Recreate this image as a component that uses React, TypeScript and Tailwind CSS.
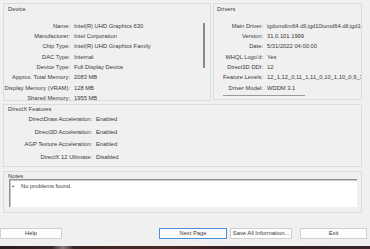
import React from 'react';

const deviceRows: [string, string][] = [
  ['Name:', 'Intel(R) UHD Graphics 630'],
  ['Manufacturer:', 'Intel Corporation'],
  ['Chip Type:', 'Intel(R) UHD Graphics Family'],
  ['DAC Type:', 'Internal'],
  ['Device Type:', 'Full Display Device'],
  ['Approx. Total Memory:', '2083 MB'],
  ['Display Memory (VRAM):', '128 MB'],
  ['Shared Memory:', '1955 MB'],
];

const driverRows: [string, string][] = [
  ['Main Driver:', 'igdumdim64.dll,igd10iumd64.dll,igd10iumd64.dll'],
  ['Version:', '31.0.101.1999'],
  ['Date:', '5/31/2022 04:00:00'],
  ['WHQL Logo\'d:', 'Yes'],
  ['Direct3D DDI:', '12'],
  ['Feature Levels:', '12_1,12_0,11_1,11_0,10_1,10_0,9_3'],
  ['Driver Model:', 'WDDM 3.1'],
];

const featureRows: [string, string][] = [
  ['DirectDraw Acceleration:', 'Enabled'],
  ['Direct3D Acceleration:', 'Enabled'],
  ['AGP Texture Acceleration:', 'Enabled'],
  ['DirectX 12 Ultimate:', 'Disabled'],
];

const Row: React.FC<{ label: string; value: string; labelW: string; h: string }> = ({ label, value, labelW, h }) => (
  <div className={`flex items-center whitespace-nowrap ${h}`}>
    <div className={`flex shrink-0 justify-end ${labelW}`}>
      <span>{label}</span>
    </div>
    <span className="pl-[4px]">{value}</span>
  </div>
);

export default function App() {
  return (
    <div
      className="relative flex h-[249px] w-[370px] flex-col overflow-hidden bg-[#f0f0f0] text-[5.8px] text-[#3a3a3a]"
      style={{ fontFamily: '"Liberation Sans", Arial, sans-serif' }}
    >
      {/* top row */}
      <div className="flex h-[101px] shrink-0 gap-[2px] pl-[3px] pt-[3px]">
        <div className="relative h-[98px] w-[208px] border border-[#dcdcdc]">
          <div className="absolute left-[4px] top-[1px] leading-[8px]">Device</div>
          <div className="mt-[17px] flex flex-col">
            {deviceRows.map(([l, v]) => (
              <Row key={l} label={l} value={v} labelW="w-[66px]" h="h-[10.3px]" />
            ))}
          </div>
          <div className="absolute left-[199px] top-[19px] h-[45px] w-[1.5px] bg-[#8a8a8a]" />
        </div>
        <div className="relative h-[97px] w-[149px] overflow-hidden border border-[#dcdcdc]">
          <div className="absolute left-[3px] top-[1px] leading-[8px]">Drivers</div>
          <div className="mt-[17px] flex flex-col">
            {driverRows.map(([l, v]) => (
              <Row key={l} label={l} value={v} labelW="w-[49px]" h="h-[10.3px]" />
            ))}
          </div>
          <div className="absolute bottom-[3px] left-[9px] h-[1.5px] w-[82px] bg-[#9a9a9a]" />
        </div>
      </div>

      {/* DirectX Features */}
      <div className="relative ml-[3px] mt-[3px] h-[63px] w-[359px] shrink-0 border border-[#dcdcdc]">
        <div className="absolute left-[4px] top-[0px] leading-[8px]">DirectX Features</div>
        <div className="mt-[8px] flex flex-col">
          {featureRows.map(([l, v]) => (
            <Row key={l} label={l} value={v} labelW="w-[88px]" h="h-[12.7px]" />
          ))}
        </div>
      </div>

      {/* Notes */}
      <div className="relative ml-[3px] mt-[4px] h-[42px] w-[359px] shrink-0 border border-[#dcdcdc] px-[5px] pt-[7px]">
        <div className="absolute left-[4px] top-[0px] leading-[8px]">Notes</div>
        <div className="h-[28px] w-[348px] border-l border-t border-[#8f8f8f] bg-white shadow-[inset_1px_1px_0_#c8c8c8]">
          <div className="flex items-center gap-[7px] pl-[2px] pt-[2px] leading-[8px]">
            <span>•</span>
            <span>No problems found.</span>
          </div>
        </div>
      </div>

      {/* Buttons */}
      <div className="mt-[15px] flex h-[11px] shrink-0 items-stretch whitespace-nowrap text-[5.8px]">
        <button className="flex w-[62px] items-center justify-center border border-[#d0d0d0] bg-[#fdfdfd]">Help</button>
        <button className="ml-[97px] flex w-[68px] items-center justify-center border border-[#4a8fd8] bg-[#fdfdfd]">Next Page</button>
        <button className="ml-[3px] flex w-[62px] items-center justify-center overflow-hidden border border-[#d0d0d0] bg-[#fdfdfd]">Save All Information...</button>
        <button className="ml-[8px] flex w-[67px] items-center justify-center border border-[#d0d0d0] bg-[#fdfdfd]">Exit</button>
      </div>

      {/* wallpaper strip */}
      <div className="mt-auto h-[3px] w-full bg-[linear-gradient(90deg,#2b1d1f_0%,#3a2526_14%,#8a7c7a_17%,#3a2526_20%,#4a2a27_45%,#2e1f22_70%,#3b2526_100%)]" />
    </div>
  );
}
